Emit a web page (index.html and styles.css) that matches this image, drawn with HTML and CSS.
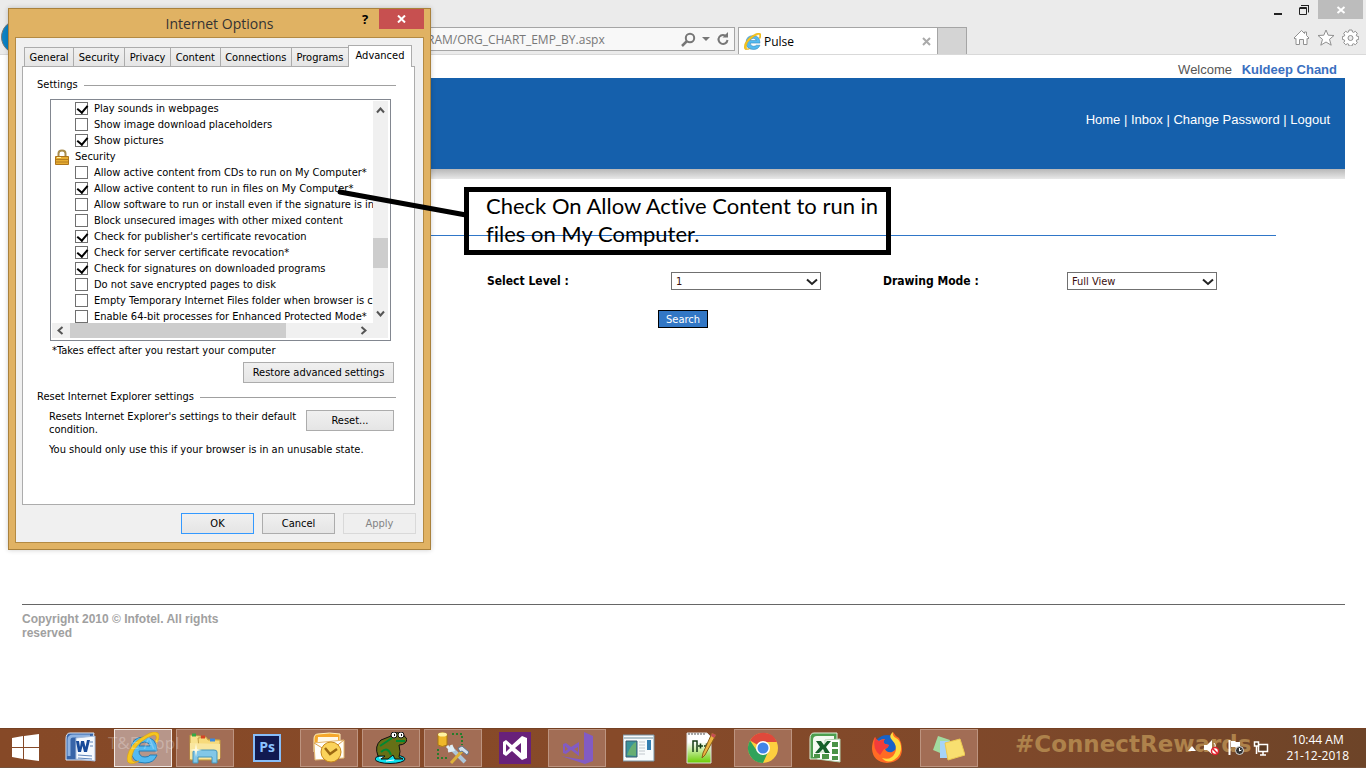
FILE: index.html
```html
<!DOCTYPE html>
<html lang="en">
<head>
<meta charset="utf-8">
<title>Pulse</title>
<link rel="stylesheet" href="styles.css">
</head>
<body>
<div class="desktop">
  <header class="browser-bar">
    <div class="window-controls">
      <button class="win-btn" aria-label="Minimize"><svg width="10" height="12"><path d="M1 10h8" stroke="#222" stroke-width="2"/></svg></button>
      <button class="win-btn" aria-label="Restore"><svg width="12" height="12"><path d="M1.500 4v6.500h7V3.500h-7M1 4.500h8M3.500 1.500h7v7M3 1.500h8" fill="none" stroke="#222"/></svg></button>
      <button class="win-btn win-close" aria-label="Close window"><svg width="10" height="10"><path d="M1.500 2l7 6M8.500 2l-7 6" stroke="#fff" stroke-width="2"/></svg></button>
    </div>
    <div class="nav-row">
      <button class="back" aria-label="Back"></button>
      <div class="address">
        <input class="address-text" aria-label="Address" value="RAM/ORG_CHART_EMP_BY.aspx">
        <button class="icon-btn" aria-label="Search the web"><svg width="15" height="15"><circle cx="9" cy="6" r="4.200" fill="none" stroke="#777" stroke-width="2"/><path d="M6 9l-5 5" stroke="#777" stroke-width="2.500"/></svg></button>
        <button class="icon-btn" aria-label="Show addresses"><svg width="8" height="5"><path d="M0 0h8L4 4z" fill="#777"/></svg></button>
        <button class="icon-btn" aria-label="Refresh"><svg width="14" height="14"><path d="M10.500 4.500A4.500 4.500 0 1 0 11.500 8" fill="none" stroke="#777" stroke-width="2"/><path d="M6.500 5.500H12V0z" fill="#777"/></svg></button>
      </div>
      <div class="tab">
        <svg width="17" height="17" viewBox="0 0 32 32"><use href="#ie"/></svg>
        <span class="tab-title">Pulse</span>
        <button class="icon-btn" aria-label="Close tab"><svg width="9" height="9"><path d="M1 1l7 7M8 1L1 8" stroke="#aaa" stroke-width="2"/></svg></button>
      </div>
      <button class="new-tab" aria-label="New tab"></button>
      <div class="tools">
        <button class="icon-btn" aria-label="Home page"><svg width="17" height="17"><path d="M1 9l7.500-7.500 3 3V3h2v3.500L16 9l-1 1-1-.5v6h-3.500v-5h-4v5H3v-6l-1 .5z" fill="#fff" stroke="#909090"/></svg></button>
        <button class="icon-btn" aria-label="Favorites"><svg width="18" height="17"><path d="M9 1l2.200 5.200 5.800.3-4.500 3.800 1.700 5.900L9 13l-5.200 3.200 1.700-5.900L1 6.500l5.800-.3z" fill="#fff" stroke="#909090"/></svg></button>
        <button class="icon-btn" aria-label="Tools"><svg width="17" height="17" viewBox="0 0 17 17"><path d="M7 1h3l.5 2 1 .4 1.800-1.100 2 2-1 1.900.4.900 2 .5v2.800l-2 .5-.4 1 1 1.800-2 2-1.800-1-1 .4-.5 1.900H7l-.5-1.900-1-.4-1.800 1-2-2 1-1.800-.4-1-1.900-.5V7.600l1.900-.5.400-.9-1-1.900 2-2 1.800 1.100 1-.4z" fill="#fff" stroke="#909090"/><circle cx="8.500" cy="9" r="2.500" fill="#eee" stroke="#909090"/></svg></button>
      </div>
    </div>
  </header>

  <main class="page">
    <p class="welcome">Welcome <a href="#user" class="user">Kuldeep Chand</a></p>
    <nav class="banner"><span><a href="#home">Home</a> | <a href="#inbox">Inbox</a> | <a href="#password">Change Password</a> | <a href="#logout">Logout</a></span></nav>
    <div class="banner-shadow"></div>
    <form class="chart-form">
      <div class="fields">
        <label for="level">Select Level :</label>
        <div class="select"><select id="level"><option>1</option></select><svg width="12" height="8"><path d="M1 1.500l5 4.500 5-4.500" fill="none" stroke="#222" stroke-width="2"/></svg></div>
        <label for="mode">Drawing Mode :</label>
        <div class="select"><select id="mode"><option>Full View</option></select><svg width="12" height="8"><path d="M1 1.500l5 4.500 5-4.500" fill="none" stroke="#222" stroke-width="2"/></svg></div>
      </div>
      <button type="button" class="search">Search</button>
    </form>
    <footer class="copyright"><p>Copyright 2010 © Infotel. All rights reserved</p></footer>
  </main>

  <footer class="taskbar">
    <button class="start" aria-label="Start"><svg width="28" height="28"><path d="M0 4l11-2v11H0zM12 2l15-2v13H12zM0 14h11v11L0 23zM12 14h15v13l-15-2z" fill="#fff"/></svg></button>
    <div class="apps">
      <button class="app" aria-label="Word"><svg width="32" height="32"><path d="M5 1h24c-2 8-3 18-2 27H1V7q0-6 4-6z" fill="#3764a8" stroke="#dce8f8"/><path d="M4 24V8q0-4 4-4h17" fill="none" stroke="#8eb2e2" stroke-width="3"/><path d="M11 6l19-2v25l-19-2z" fill="#f5f9ff" stroke="#a8bddc"/><path d="M13 23l14 1M13 26l14 1M25 10h3M25 14h3" stroke="#5d84ba"/><path d="M11 9l2 11h3l1.500-6 1.500 6h3L25 8h-3l-1.500 7L19 9h-3l-1 6-1-6z" fill="#174a9a"/></svg></button>
      <button class="app running active" aria-label="Internet Explorer"><svg width="32" height="32" viewBox="0 0 32 32"><g id="ie"><path d="M30 19H12q0 6 6 6 4 0 5-2h7q-3 8-12 8Q4 31 4 18 4 5 17 5q13 0 13 14zM12 14h11q-1-4-5.500-4T12 14z" fill="#54baf0" stroke="#247db5"/><path d="M24 4Q28 2 29 4q1 2-1 5l2 2q4-7 1-10-4-3-12 2Q7 9 2 19-2 29 2 31q4 2 10-2-6 2-7-1-1-4 2-10Q14 8 24 4z" fill="#f5c51e" stroke="#d89c12" stroke-width=".6"/></g></svg></button>
      <button class="app running" aria-label="File Explorer"><svg width="34" height="32"><path d="M2 3l11 1 1 3 17 1v20H2z" fill="#f8e28e" stroke="#bc983e"/><path d="M10 6l8-1 2 3h12v18H12z" fill="#f7da7b" stroke="#c7a144"/><path d="M4 3h4" stroke="#3a4" stroke-width="3"/><path d="M13 5h4" stroke="#d64424" stroke-width="3"/><path d="M22 8h5" stroke="#3a8be0" stroke-width="3"/><path d="M2 11l30 1v15H2z" fill="#f9e69e"/><path d="M5 31V20q0-2 3-2h18q3 0 3 2v11h-5v-6H10v6z" fill="#82c7e8" stroke="#4796ba"/><path d="M8 11l1 6 5 1-5 1-1 6-1-6-5-1 5-1z" fill="#fffbe0"/></svg></button>
      <button class="app" aria-label="Photoshop"><svg width="28" height="28"><rect x="1" y="1" width="26" height="26" fill="#111a50" stroke="#87bdf8" stroke-width="2"/><text x="14" y="18" class="ps" text-anchor="middle">Ps</text></svg></button>
      <button class="app running" aria-label="Outlook"><svg width="32" height="32"><path d="M5 2q12-2 22 0v18H1V7q0-5 4-5z" fill="#f5a72c" stroke="#fff1bd"/><path d="M5 5h20v14H4z" fill="#fff8e8"/><path d="M1 11l30-3v18L2 28z" fill="#fffdf8" stroke="#e4b76e"/><path d="M1 11l15 9L31 8" fill="none" stroke="#dda04c"/><circle cx="18" cy="20" r="10" fill="#fbd35b" stroke="#c98a1b"/><path d="M12 16l5 6 7-5" fill="none" stroke="#9b6812" stroke-width="2.500"/></svg></button>
      <button class="app running" aria-label="Toad"><svg width="32" height="32"><ellipse cx="15" cy="27" rx="15" ry="4.500" fill="#0de1ee" stroke="#111"/><path d="M4 26l6-1M11 29l8-1M20 25l7 2" stroke="#fff"/><path d="M3 24Q-1 14 6 8l10-4q0-4 4-4 2 0 3 1 5-2 6 3 5 3 1 7-2 2-6 2 2 7 0 12l4 2h-8l-2-4-5 4H6l4-3z" fill="#667016" stroke="#111"/><circle cx="19" cy="3" r="3" fill="#fff" stroke="#111"/><circle cx="26" cy="3" r="3" fill="#fff" stroke="#111"/><path d="M19 3h1M26 3h1" stroke="#111" stroke-width="2"/><path d="M5 14l12-8M21 9h9M6 20q7-6 10 3" stroke="#083" stroke-width="2" fill="none"/></svg></button>
      <button class="app running" aria-label="Database Tools"><svg width="32" height="32"><path d="M1 2q4-3 9 0v11q-5 3-9 0z" fill="#efb729" stroke="#a97915"/><ellipse cx="5.500" cy="2.500" rx="4.500" ry="2" fill="#fff3a2"/><path d="M15 2h10v11M10 26H1V15" fill="none" stroke="#277c2b" stroke-width="2" stroke-dasharray="2 2"/><path d="M14 16l14 14" stroke="#adc5d8" stroke-width="4"/><path d="M10 14l5 5M14 13l2 5-5 1" stroke="#dfeef7" stroke-width="3" fill="none"/><path d="M14 31l12-13" stroke="#deb13a" stroke-width="3"/><path d="M21 16l4-2 7 6-2 3-5-4-2 1z" fill="#d4e0ed" stroke="#617489"/></svg></button>
      <button class="app" aria-label="Visual Studio"><svg width="32" height="32"><rect width="32" height="32" fill="#68217a"/><path d="M23 4l5 2v20l-5 2-10-9-6 5-3-2V10l3-2 6 5zM7 12v8l4-4zM22 11l-6 5 6 5z" fill="#fff" fill-rule="evenodd"/></svg></button>
      <button class="app running" aria-label="Visual Studio Blend"><svg width="32" height="32"><path d="M23 0l9 4v25l-8 3L0 24l23 4zM18 10v14l-8-6-5 4-3-1v-9l3-1 5 4zM4 14v5l3-2zM17 15l-4 2 4 3z" fill="#825bc3" fill-rule="evenodd"/></svg></button>
      <button class="app" aria-label="Media Viewer"><svg width="32" height="28"><path d="M0 1h31v26H0z" fill="#f8fbfc" stroke="#7694a6"/><path d="M1 4h30" stroke="#b4c6ce" stroke-width="2"/><path d="M3 7h11v16H3z" fill="#3a939a" stroke="#385d70"/><path d="M4 21Q8 10 13 8v14z" fill="#67ae73"/><path d="M16 8h6M16 11h6M16 14h6M16 17h6M16 20h6" stroke="#c1c8cd"/><path d="M24 6h4v10h-4z" fill="#327eb0"/></svg></button>
      <button class="app" aria-label="Notepad++"><svg width="32" height="32"><defs><linearGradient id="npp" x2="0" y2="1"><stop offset=".3" stop-color="#fff"/><stop offset="1" stop-color="#68cc00"/></linearGradient></defs><path d="M2 1h20l4 4v26H2z" fill="url(#npp)" stroke="#ddd"/><path d="M4 1v2m3-2v2m3-2v2m3-2v2m3-2v2m3-2v2" stroke="#555"/><path d="M8 20V9h4v11M13 14h5m-2.500-2.500v5M19 14h5m-2.500-2.500v5" stroke="#143b14" stroke-width="1.500" fill="none"/><path d="M27 1l4 2-11 20-3 3 1-5z" fill="#ecb440" stroke="#8c5e18"/><path d="M27 1l4 2-2 3-3-2z" fill="#c54d55"/></svg></button>
      <button class="app running" aria-label="Chrome"><svg width="32" height="32"><circle cx="16" cy="16" r="15" fill="#fdcf3f"/><path d="M16 16L3 8.500A15 15 0 0 1 30 10H16z" fill="#df493b"/><path d="M16 31A15 15 0 0 1 3 8.500L10 19l6 4 5-3z" fill="#30a35a"/><circle cx="16" cy="16" r="7" fill="#fff"/><circle cx="16" cy="16" r="5.500" fill="#4285e8"/></svg></button>
      <button class="app" aria-label="Excel"><svg width="32" height="32"><path d="M5 1h23v26H1V7q0-6 4-6z" fill="#4d9f4f" stroke="#dff2dc"/><path d="M4 25V8q0-4 4-4h17v20z" fill="#f4faf2"/><path d="M16 8l15-1v23l-23-3v-7h8z" fill="#fff" stroke="#b4d3b0"/><path d="M23 10h6v5h-6zM23 17h6v5h-6zM23 24h6v4h-6zM13 22h7v5h-7zM5 22h6v4H5z" fill="#4a9347"/><path d="M7 9h5l3 4 3-4h4l-5 6 4 6h-5l-2-4-4 4H6l5-6z" fill="#17602b"/></svg></button>
      <button class="app" aria-label="Firefox"><svg width="32" height="32"><circle cx="16" cy="16" r="13" fill="#1762c8"/><path d="M4 5q1 3 4 4 2-2 6-2-3 3 0 5l4 1q-1 3-4 4 2 4 7 3 5-2 4-7-1-3-3-5-3-5 0-8 2 4 6 6 3 5 3 11 0 13-15 14Q2 30 1 17 1 10 4 5z" fill="#ff6b24"/><path d="M22 0q-5 4-1 8 6 6 3 13-4 8-13 5 5 6 12 2 8-5 7-14-1-6-5-8-4-2-3-6z" fill="#ffdc3e"/><path d="M4 5q1 3 4 4l6-2q-3 3 0 5l4 1q-1 3-5 4l-4 6Q1 17 4 5z" fill="#f13c3b"/></svg></button>
      <button class="app running" aria-label="Sticky Notes"><svg width="32" height="32"><path d="M5 4l12 4-5 15-12-5z" fill="#a2dba0"/><path d="M7 9h15v17H7z" fill="#a6d4f7"/><path d="M12 11l15-4 5 16-17 5z" fill="#f8df70" stroke="#edca52"/></svg></button>
    </div>
    <div class="tray">
      <button class="icon-btn" aria-label="Hidden icons"><svg width="8" height="5"><path d="M0 5l4-5 4 5z" fill="#fff"/></svg></button>
      <button class="icon-btn" aria-label="Volume"><svg width="16" height="16"><path d="M0 5h3l5-5v14l-5-4H0z" fill="#fff"/><path d="M10 3q2 2 1 4" stroke="#fff" fill="none"/><circle cx="11" cy="11" r="3.500" fill="#fff" stroke="#e1222d" stroke-width="1.500"/><path d="M8.500 8.500l5 5" stroke="#e1222d" stroke-width="1.500"/></svg></button>
      <button class="icon-btn" aria-label="Action Center"><svg width="17" height="16"><path d="M1.500 0v15" stroke="#fff" stroke-width="2"/><path d="M3 1h4l1 1h4v6H8L7 7H3z" fill="#fff"/><circle cx="11.500" cy="10.500" r="4" fill="#333" stroke="#ddd"/><path d="M11.500 8v3l2-1" stroke="#fff" fill="none"/></svg></button>
      <button class="icon-btn" aria-label="Network"><svg width="16" height="15"><path d="M5.500 3.500h9v7h-9zM10 11v3M7 14h6" stroke="#fff" stroke-width="1.500" fill="#5b3b24"/><path d="M1.500 1h4v4h-4zM3.500 5v8" stroke="#fff" stroke-width="1.500" fill="#5b3b24"/></svg></button>
      <div class="clock"><span>10:44 AM</span><span>21-12-2018</span></div>
    </div>
    <span class="wall-text wall-left">T&amp;E Appl</span>
    <span class="wall-text wall-right">#ConnectRewards</span>
  </footer>

  <section class="dialog" aria-label="Internet Options">
    <div class="title-bar">
      <h1 class="dialog-title">Internet Options</h1>
      <button class="help" aria-label="Help">?</button>
      <button class="dialog-close" aria-label="Close"><svg width="9" height="8"><path d="M1 .5l7 7M8 .5l-7 7" stroke="#fff" stroke-width="2"/></svg></button>
    </div>
    <div class="client">
      <div class="tabs">
        <button>General</button><button>Security</button><button>Privacy</button><button>Content</button><button>Connections</button><button>Programs</button><button class="selected">Advanced</button>
      </div>
      <div class="panel">
        <h2 class="group-title">Settings</h2>
        <div class="list-box">
          <ul class="list">
            <li><label><input type="checkbox" checked>Play sounds in webpages</label></li>
            <li><label><input type="checkbox">Show image download placeholders</label></li>
            <li><label><input type="checkbox" checked>Show pictures</label></li>
            <li class="category"><svg width="14" height="16"><path d="M3.500 8V4.500q0-3 3.500-3t3.500 3V8" fill="none" stroke="#a98c4b" stroke-width="2"/><path d="M.5 7.500h13v8H.5z" fill="#e7ad32" stroke="#ad741c"/><path d="M1 10.500h12M1 13h12" stroke="#b47d20"/><path d="M2 8.500h4" stroke="#fff0a0"/></svg>Security</li>
            <li><label><input type="checkbox">Allow active content from CDs to run on My Computer*</label></li>
            <li><label><input type="checkbox" checked>Allow active content to run in files on My Computer*</label></li>
            <li><label><input type="checkbox">Allow software to run or install even if the signature is invalid</label></li>
            <li><label><input type="checkbox">Block unsecured images with other mixed content</label></li>
            <li><label><input type="checkbox" checked>Check for publisher's certificate revocation</label></li>
            <li><label><input type="checkbox" checked>Check for server certificate revocation*</label></li>
            <li><label><input type="checkbox" checked>Check for signatures on downloaded programs</label></li>
            <li><label><input type="checkbox">Do not save encrypted pages to disk</label></li>
            <li><label><input type="checkbox">Empty Temporary Internet Files folder when browser is closed</label></li>
            <li><label><input type="checkbox">Enable 64-bit processes for Enhanced Protected Mode*</label></li>
          </ul>
          <div class="vbar">
            <svg width="9" height="7"><path d="M1 5.500l3.500-4 3.500 4" fill="none" stroke="#555" stroke-width="2"/></svg>
            <div class="vthumb"></div>
            <svg width="9" height="7"><path d="M1 1.500l3.500 4 3.500-4" fill="none" stroke="#555" stroke-width="2"/></svg>
          </div>
          <div class="hbar">
            <svg width="7" height="9"><path d="M5.500 1l-4 3.500 4 3.500" fill="none" stroke="#555" stroke-width="2"/></svg>
            <div class="htrack"><div class="hthumb"></div></div>
            <svg width="7" height="9"><path d="M1.500 1l4 3.500-4 3.500" fill="none" stroke="#555" stroke-width="2"/></svg>
          </div>
        </div>
        <p class="note">*Takes effect after you restart your computer</p>
        <div class="restore-row"><button class="btn btn-restore">Restore advanced settings</button></div>
        <h2 class="group-title">Reset Internet Explorer settings</h2>
        <div class="reset-row">
          <p>Resets Internet Explorer's settings to their default condition.</p>
          <button class="btn btn-reset">Reset...</button>
        </div>
        <p class="warning">You should only use this if your browser is in an unusable state.</p>
      </div>
      <div class="actions">
        <button class="btn btn-default">OK</button><button class="btn">Cancel</button><button class="btn" disabled>Apply</button>
      </div>
    </div>
  </section>

  <svg class="pointer" width="132" height="34"><path d="M4 5l126 23" stroke="#000" stroke-width="5" stroke-linecap="round"/></svg>
  <p class="callout">Check On Allow Active Content to run in files on My Computer.</p>
</div>
</body>
</html>
```
FILE: styles.css
```css
* { box-sizing: border-box; }
body, p, h1, h2, ul { margin: 0; padding: 0; }
body { font-family: "DejaVu Sans Condensed", "DejaVu Sans", sans-serif; font-size: 11px; color: #000; }
button { font: inherit; padding: 0; border: 0; background: none; color: inherit; }
svg { display: block; flex: none; }
a { color: inherit; text-decoration: none; }
.desktop { position: relative; display: flex; flex-direction: column; min-height: 100vh; background: #fff; }

/* Browser frame */
.browser-bar { background: #ebebeb; border-bottom: 1px solid #d9d9d9; font-family: "Open Sans", sans-serif; }
.window-controls { display: flex; justify-content: flex-end; height: 19px; padding-right: 3px; }
.win-btn { display: flex; align-items: center; justify-content: center; width: 26px; }
.win-close { width: 45px; margin-left: 1px; background: #bcbcbc; }
.nav-row { display: flex; align-items: flex-end; height: 35px; }
.icon-btn { display: flex; align-items: center; justify-content: center; }
.back { width: 34px; height: 34px; margin-left: 1px; border-radius: 50%; background: #0a83c6; border: 1px solid #777; }
.address { display: flex; align-items: center; gap: 6px; width: 700px; height: 24px; margin-bottom: 3px; padding: 0 4px 0 6px; border: 1px solid #a5a5a5; background: #f8f8f8; }
.address-text { flex: 1; min-width: 0; padding: 0 0 0 385px; border: 0; background: none; font: 12px "Open Sans", sans-serif; color: #777; }
.tab { display: flex; align-items: center; gap: 3px; width: 200px; height: 27px; margin-left: 3px; padding: 0 6px 0 5px; border: 1px solid #a5a5a5; border-bottom: 0; background: #fff; }
.tab-title { flex: 1; font-size: 12px; }
.new-tab { width: 29px; height: 27px; border: 1px solid #a5a5a5; border-width: 1px 1px 0 0; background: #d4d4d4; }
.tools { display: flex; gap: 7px; margin-left: auto; padding: 0 7px 8px 0; }

/* Page */
.page { flex: 1; display: flex; flex-direction: column; padding: 0 21px 0 22px; font-family: "Liberation Sans", Arial, sans-serif; }
.welcome { height: 23px; padding: 7px 8px 0 0; text-align: right; font-size: 13px; line-height: 16px; color: #555; }
.user { margin-left: 6px; font-weight: bold; color: #3a6fc0; }
.banner { display: flex; align-items: center; justify-content: flex-end; height: 91px; padding: 0 15px 8px 0; background: #1560ac; color: #fff; font-size: 13px; }
.banner-shadow { height: 10px; background: linear-gradient(#b8b8b8, #e8e8e8); }
.chart-form { margin: 56px 69px 0 0; border-top: 1px solid #2f76c8; font-family: "DejaVu Sans Condensed", sans-serif; }
.fields { display: grid; grid-template-columns: 184px 212px 184px 150px; align-items: center; margin: 36px 0 0 465px; font-size: 12px; font-weight: bold; }
.select { position: relative; width: 150px; }
.select select { display: block; width: 100%; height: 18px; padding: 0 4px; appearance: none; border: 1px solid #707070; border-radius: 0; background: #fff; font: 11px "DejaVu Sans Condensed", sans-serif; color: #3c1010; }
.select svg { position: absolute; right: 3px; top: 6px; pointer-events: none; }
.search { display: block; width: 50px; height: 18px; margin: 20px 0 0 636px; border: 1px solid #000; background: #3277c5; color: #fff; }
.copyright { margin-top: auto; min-height: 124px; padding-top: 7px; border-top: 1px solid #666; color: #a0a0a0; font-size: 12px; line-height: 14px; font-weight: bold; }
.copyright p { max-width: 210px; }

/* Taskbar */
.taskbar { position: relative; display: flex; height: 40px; background: linear-gradient(90deg, #864927 0%, #874a29 45%, #7e482a 75%, #6d4428 100%); border-top: 1px solid #754123; border-bottom: 1px solid #76513a; font-family: "Open Sans", sans-serif; }
.start { display: flex; align-items: center; width: 52px; padding-left: 12px; }
.apps { display: flex; gap: 4px; }
.app { display: flex; align-items: center; justify-content: center; width: 58px; }
.running { border: 1px solid #bd9480; background: #a26d55; }
.active { border-color: #f1e7e2; background: #b7968a; }
.ps { font: bold 14px "Open Sans", sans-serif; fill: #8cc4ff; }
.tray { position: relative; z-index: 1; display: flex; align-items: center; gap: 8px; margin-left: auto; padding-right: 17px; color: #fff; }
.clock { display: flex; flex-direction: column; align-items: center; margin-left: 9px; font-size: 12px; line-height: 16px; }
.wall-text { position: absolute; pointer-events: none; white-space: nowrap; }
.wall-left { left: 108px; top: 2px; font-size: 17px; color: #ffffff44; }
.wall-right { left: 1015px; top: 2px; font: bold 23px "DejaVu Sans", sans-serif; color: #ae824b; }

/* Internet Options window */
.dialog { position: absolute; left: 8px; top: 8px; width: 423px; padding: 0 6px 6px; border: 1px solid #a9813c; background: #e0b263; box-shadow: 0 0 5px #0003; }
.title-bar { display: grid; grid-template-columns: 1fr auto 28px 45px; height: 28px; }
.dialog-title { grid-column: 1 / -1; grid-row: 1; text-align: center; font: 14px/29px "Open Sans", sans-serif; color: #333; }
.help { grid-column: 3; grid-row: 1; height: 20px; font: bold 13px "Open Sans", sans-serif; }
.dialog-close { grid-column: 4; grid-row: 1; display: flex; align-items: center; justify-content: center; height: 20px; background: #c75050; }
.client { padding: 7px 7px 8px 6px; border: 1px solid #b38a43; background: #f0f0f0; }
.tabs { display: flex; align-items: flex-end; padding: 0 4px 0 2px; }
.tabs button { flex: auto; height: 19px; border: 1px solid #acacac; border-width: 1px 0 0 1px; background: linear-gradient(#f0f0f0, #e5e5e5); }
.tabs .selected { flex: none; width: 64px; height: 22px; margin-bottom: -1px; padding-bottom: 3px; border-right-width: 1px; background: #fff; position: relative; }
.panel { height: 439px; margin-right: 1px; padding: 10px 18px 0 14px; border: 1px solid #acacac; background: #fff; }
.group-title { display: flex; align-items: center; gap: 6px; font-size: 11px; line-height: 16px; font-weight: normal; }
.group-title::after { content: ""; flex: 1; height: 1px; background: #a0a0a0; }
.list-box { display: grid; grid-template-columns: 1fr 15px; grid-template-rows: 222px 15px; height: 242px; margin: 6px 5px 0 13px; padding: 1px 2px 2px 1px; border: 1px solid #828790; }
.list { list-style: none; overflow: hidden; padding-left: 23px; white-space: nowrap; }
.list li { height: 16px; line-height: 16px; }
.list label { display: flex; align-items: flex-start; gap: 6px; height: 16px; }
.list input { appearance: none; flex: none; width: 13px; height: 13px; margin: 1px 0 0; border: 1px solid #707070; background: #fff; }
.list input:checked::after { content: ""; display: block; width: 5px; height: 8px; margin: 0 0 0 3px; border: solid #000; border-width: 0 2px 2px 0; transform: rotate(40deg); }
.list .category { display: flex; gap: 6px; margin-left: -20px; }
.vbar { display: flex; flex-direction: column; align-items: center; padding: 6px 0; background: #f0f0f0; }
.vthumb { width: 100%; height: 30px; margin: 124px 0 auto; background: #cdcdcd; }
.hbar { grid-column: 1 / -1; display: flex; align-items: center; gap: 6px; padding: 0 21px 0 5px; background: #f0f0f0; }
.htrack { flex: 1; height: 15px; }
.hthumb { width: 76%; height: 100%; background: #cdcdcd; }
.note { margin: 1px 0 0 15px; line-height: 18px; }
.restore-row { display: flex; justify-content: flex-end; margin: 2px 2px 6px 0; }
.btn { width: 73px; height: 21px; border: 1px solid #acacac; background: linear-gradient(#f0f0f0, #e5e5e5); }
.btn-restore { width: 151px; }
.btn-reset { flex: none; width: 88px; }
.reset-row { display: flex; justify-content: space-between; margin: 5px 2px 0 12px; }
.reset-row p { width: 252px; line-height: 13px; }
.warning { margin: 7px 0 0 12px; line-height: 14px; }
.actions { display: flex; justify-content: flex-end; gap: 8px; padding-top: 8px; }
.btn-default { border-color: #3399ff; }
.btn:disabled { border-color: #d9d9d9; background: #efefef; color: #838383; }

/* Annotation */
.pointer { position: absolute; left: 336px; top: 187px; }
.callout { position: absolute; left: 464px; top: 187px; width: 427px; padding: 0 0 2px 17px; border: 5px solid #000; font: 22px/28px Lato, sans-serif; font-variant-ligatures: none; }
```
